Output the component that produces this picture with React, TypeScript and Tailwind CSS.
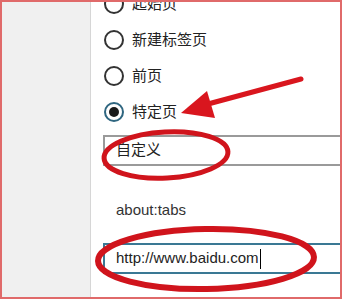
import React from "react";

const font = { fontFamily: '"Liberation Sans", "Noto Sans CJK SC", sans-serif' };

function Radio({ label, checked }: { label: string; checked?: boolean }) {
  return (
    <div className="flex h-[36px] items-center gap-[8px]">
      {checked ? (
        <div className="flex h-[20px] w-[20px] items-center justify-center rounded-full border-2 border-[#2f6680]">
          <div className="h-[10px] w-[10px] rounded-full bg-[#1a1a1a]" />
        </div>
      ) : (
        <div className="h-[20px] w-[20px] rounded-full border-2 border-[#333333]" />
      )}
      <span className="text-[15px] leading-[20px] text-[#222222]">{label}</span>
    </div>
  );
}

export default function App() {
  return (
    <div
      className="relative h-[299px] w-[342px] overflow-hidden border-2 border-[#e06a6a] bg-white"
      style={font}
    >
      <div className="flex h-full">
        <div className="w-[89px] shrink-0 border-r border-[#d6d6d6] bg-[#f0f0f0]" />
        <div className="flex-1 pl-[12px]">
          <div className="-mt-[16px] pl-[1px]">
            <Radio label="起始页" />
            <Radio label="新建标签页" />
            <Radio label="前页" />
            <Radio label="特定页" checked />
          </div>
          <div className="mt-[5px] -mr-[4px] flex h-[31px] items-center border-2 border-[#9a9a9a] pl-[11px] text-[15px] text-[#222222]">
            自定义
          </div>
          <div className="h-[77px] pl-[13px] pt-[34px] text-[15px] leading-[20px] text-[#333333]">
            about:tabs
          </div>
          <div className="-mr-[4px] flex h-[31px] items-center border-2 border-[#3a7894] pl-[11px] text-[15px] text-[#222222]">
            <span>http://www.baidu.com</span>
            <span className="ml-[1px] inline-block h-[20px] w-[1px] bg-black" />
          </div>
        </div>
      </div>
      <svg
        className="pointer-events-none absolute left-[-2px] top-[-2px]"
        width="342"
        height="299"
        viewBox="0 0 342 299"
      >
        <ellipse cx="166" cy="155" rx="62" ry="23" fill="none" stroke="#d0141c" strokeWidth="5" transform="rotate(-3 166 155)" />
        <ellipse cx="206" cy="259" rx="108" ry="30" fill="none" stroke="#d0141c" strokeWidth="6" transform="rotate(-1 206 259)" />
        <line x1="301" y1="79" x2="208" y2="104" stroke="#d9161e" strokeWidth="5" strokeLinecap="round" />
        <polygon points="181,113 207,91 215,118" fill="#d9161e" />
      </svg>
    </div>
  );
}
